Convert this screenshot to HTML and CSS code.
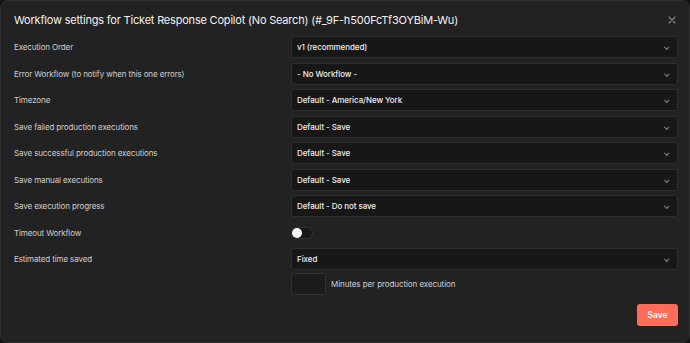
FILE: index.html
```html
<html>
    <head>
        <link rel="stylesheet" href="styles.css">
    </head>
    <body>
        <div class="modal">
            <div class="header">
                <h1 class="title">Workflow settings for Ticket Response Copilot (No Search) (#_9F-h500FcTf3OYBiM-Wu)</h1>
                <button class="close" type="button">
                    <svg width="8" height="8" viewBox="0 0 8 8"><path d="M1 1L7 7M7 1L1 7" stroke="#8a8a8a" stroke-width="1.1" stroke-linecap="round"/></svg>
                </button>
            </div>
            <div class="rows">
                <div class="row">
                    <div class="label">Execution Order</div>
                    <div class="select">v1 (recommended)<span class="chevron"></span></div>
                </div>
                <div class="row">
                    <div class="label">Error Workflow (to notify when this one errors)</div>
                    <div class="select">- No Workflow -<span class="chevron"></span></div>
                </div>
                <div class="row">
                    <div class="label">Timezone</div>
                    <div class="select">Default - America/New York<span class="chevron"></span></div>
                </div>
                <div class="row">
                    <div class="label">Save failed production executions</div>
                    <div class="select">Default - Save<span class="chevron"></span></div>
                </div>
                <div class="row">
                    <div class="label">Save successful production executions</div>
                    <div class="select">Default - Save<span class="chevron"></span></div>
                </div>
                <div class="row">
                    <div class="label">Save manual executions</div>
                    <div class="select">Default - Save<span class="chevron"></span></div>
                </div>
                <div class="row">
                    <div class="label">Save execution progress</div>
                    <div class="select">Default - Do not save<span class="chevron"></span></div>
                </div>
                <div class="row">
                    <div class="label">Timeout Workflow</div>
                    <div><span class="toggle"><span class="knob"></span></span></div>
                </div>
                <div class="row">
                    <div class="label">Estimated time saved</div>
                    <div class="select">Fixed<span class="chevron"></span></div>
                </div>
                <div class="row minutes">
                    <div></div>
                    <div class="minutes-field">
                        <span class="number"></span>
                        <span class="hint">Minutes per production execution</span>
                    </div>
                </div>
            </div>
            <div class="footer">
                <button class="save" type="button">Save</button>
            </div>
        </div>
    </body>
</html>
```
FILE: styles.css
```css
* {
    margin: 0;
    padding: 0;
    box-sizing: border-box;
}

html,body {
    height: 100%;
}

body {
    background: #141414;
    font-family: Inter, "Liberation Sans", sans-serif;
}

.modal {
    height: 100vh;
    background: #222222;
    border: 1px solid #2f2f2f;
    border-radius: 8px;
    padding: 0 11px 0 13px;
}

.header {
    display: flex;
    justify-content: space-between;
    align-items: center;
    height: 35px;
    padding-top: 2px;
}

.title {
    font-size: 11px;
    font-weight: 400;
    letter-spacing: -0.2px;
    color: #f2f2f2;
}

.close {
    background: none;
    border: none;
    width: 12px;
    height: 12px;
    display: flex;
    align-items: center;
    justify-content: center;
}

.row {
    display: grid;
    grid-template-columns: 277px 1fr;
    align-items: center;
    height: 22px;
    margin-bottom: 4.5px;
}

.label {
    font-size: 8px;
    letter-spacing: -0.12px;
    color: #cfcfcf;
}

.select {
    position: relative;
    height: 22px;
    background: #171717;
    border: 1px solid #2e2e2e;
    border-radius: 3px;
    font-size: 8px;
    font-weight: 500;
    letter-spacing: -0.08px;
    color: #eeeeee;
    display: flex;
    align-items: center;
    padding-left: 5px;
}

.chevron {
    position: absolute;
    right: 9px;
    top: 8px;
    width: 3.5px;
    height: 3.5px;
    border-right: 1px solid #888;
    border-bottom: 1px solid #888;
    transform: rotate(45deg);
}

.toggle {
    display: block;
    width: 22px;
    height: 12px;
    border-radius: 6px;
    background: #181818;
    border: 1px solid #333;
    position: relative;
}

.knob {
    position: absolute;
    left: 0px;
    top: 0px;
    width: 10px;
    height: 10px;
    border-radius: 50%;
    background: #f5f5f5;
}

.row.minutes {
    margin-top: -1.5px;
}

.minutes-field {
    display: flex;
    align-items: center;
    gap: 5px;
}

.number {
    width: 35px;
    height: 22px;
    background: #1b1b1b;
    border: 1px solid #313131;
    border-radius: 3px;
}

.hint {
    font-size: 8px;
    letter-spacing: -0.08px;
    color: #cfcfcf;
}

.footer {
    display: flex;
    justify-content: flex-end;
    margin-top: 9px;
}

.save {
    width: 41px;
    height: 22px;
    background: #ff6d5a;
    border: none;
    border-radius: 3px;
    color: #fff;
    font-family: Inter, "Liberation Sans", sans-serif;
    font-size: 8.4px;
    font-weight: 600;
}
```
